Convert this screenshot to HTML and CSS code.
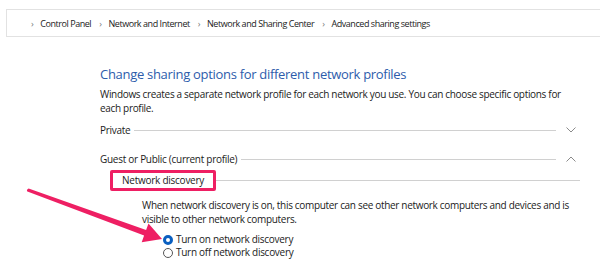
FILE: index.html
```html
<!DOCTYPE html>
<html>
<head>
<meta charset="utf-8">
<link rel="stylesheet" href="styles.css">
</head>
<body>
<nav class="crumbs">
  <span class="sep">›</span><span class="crumb">Control Panel</span>
  <span class="sep">›</span><span class="crumb">Network and Internet</span>
  <span class="sep">›</span><span class="crumb">Network and Sharing Center</span>
  <span class="sep">›</span><span class="crumb">Advanced sharing settings</span>
</nav>
<main class="content">
  <h1 class="title">Change sharing options for different network profiles</h1>
  <p class="desc">Windows creates a separate network profile for each network you use. You can choose specific options for each profile.</p>
  <div class="profile">
    <span class="profile-name">Private</span><span class="rule"></span>
    <svg class="chev" width="10" height="6" viewBox="0 0 10 6"><path d="M0.5 0.5 L5 5 L9.5 0.5" fill="none" stroke="#8a8a8a" stroke-width="1"/></svg>
  </div>
  <div class="profile open">
    <span class="profile-name">Guest or Public (current profile)</span><span class="rule"></span>
    <svg class="chev" width="10" height="6" viewBox="0 0 10 6"><path d="M0.5 5.5 L5 1 L9.5 5.5" fill="none" stroke="#8a8a8a" stroke-width="1"/></svg>
  </div>
  <div class="group">
    <span class="group-name">Network discovery</span><span class="rule"></span>
  </div>
  <p class="group-desc">When network discovery is on, this computer can see other network computers and devices and is visible to other network computers.</p>
  <div class="radios">
    <label class="radio"><span class="dot on"></span>Turn on network discovery</label>
    <label class="radio"><span class="dot"></span>Turn off network discovery</label>
  </div>
</main>
<svg class="arrow" width="600" height="269" viewBox="0 0 600 269">
  <path d="M28.6 188.4 L146.1 230.0 L148.5 223.4 L162 239 L141.7 242.2 L144.1 235.6 L27.4 191.6 Q26 190 28.6 188.4 Z" fill="#ee1f63"/>
</svg>
</body>
</html>
```
FILE: styles.css
```css
html, body {
  margin: 0;
  padding: 0;
  background: #ffffff;
  width: 600px;
  height: 269px;
  overflow: hidden;
}
body {
  font-family: "Open Sans", "Noto Sans", sans-serif;
  color: #1b1b1b;
  position: relative;
}
.crumbs {
  margin: 9px 0 0 6px;
  height: 26px;
  border: 1px solid #e2e2e2;
  border-right: none;
  display: flex;
  align-items: center;
  padding-left: 24px;
  font-size: 9px;
  letter-spacing: -0.45px;
  color: #222;
  white-space: nowrap;
}
.sep {
  color: #777;
  font-size: 9px;
  margin-right: 7px;
}
.crumb {
  margin-right: 8px;
}
.content {
  padding: 27px 0 0 100px;
}
.title {
  margin: 0;
  font-size: 13px;
  letter-spacing: -0.3px;
  font-weight: 400;
  color: #2d5cab;
  line-height: 20px;
}
.desc {
  margin: 3px 0 0 0;
  width: 470px;
  font-size: 10px;
  letter-spacing: -0.32px;
  line-height: 14px;
}
.profile {
  display: flex;
  align-items: center;
  width: 476px;
  margin-top: 8px;
  font-size: 10px;
  letter-spacing: -0.28px;
  line-height: 14px;
}
.profile.open {
  margin-top: 15px;
}
.rule {
  flex: 1;
  height: 1px;
  background: #d0d0d0;
  margin: 0 4px;
}
.chev {
  margin-left: 6px;
}
.group {
  display: flex;
  align-items: center;
  margin: 4px 0 0 10px;
  width: 470px;
  font-size: 10px;
  letter-spacing: -0.25px;
}
.group-name {
  border: 3px solid #ee1f63;
  border-radius: 2px;
  padding: 1px 9px 1px 9px;
  line-height: 13px;
}
.group .rule {
  margin: 0;
}
.group-desc {
  margin: 8px 0 0 42px;
  width: 440px;
  font-size: 10px;
  letter-spacing: -0.32px;
  line-height: 13.5px;
}
.radios {
  margin: 7px 0 0 63px;
  display: flex;
  flex-direction: column;
  font-size: 10px;
  letter-spacing: -0.28px;
  line-height: 13px;
}
.radio {
  display: flex;
  align-items: center;
}
.dot {
  width: 10px;
  height: 10px;
  border: 1px solid #555;
  border-radius: 50%;
  margin-right: 3px;
  box-sizing: border-box;
  background: #fff;
}
.dot.on {
  border: 3px solid #0a5fc0;
}
.arrow {
  position: absolute;
  left: 0;
  top: 0;
  pointer-events: none;
}
```
